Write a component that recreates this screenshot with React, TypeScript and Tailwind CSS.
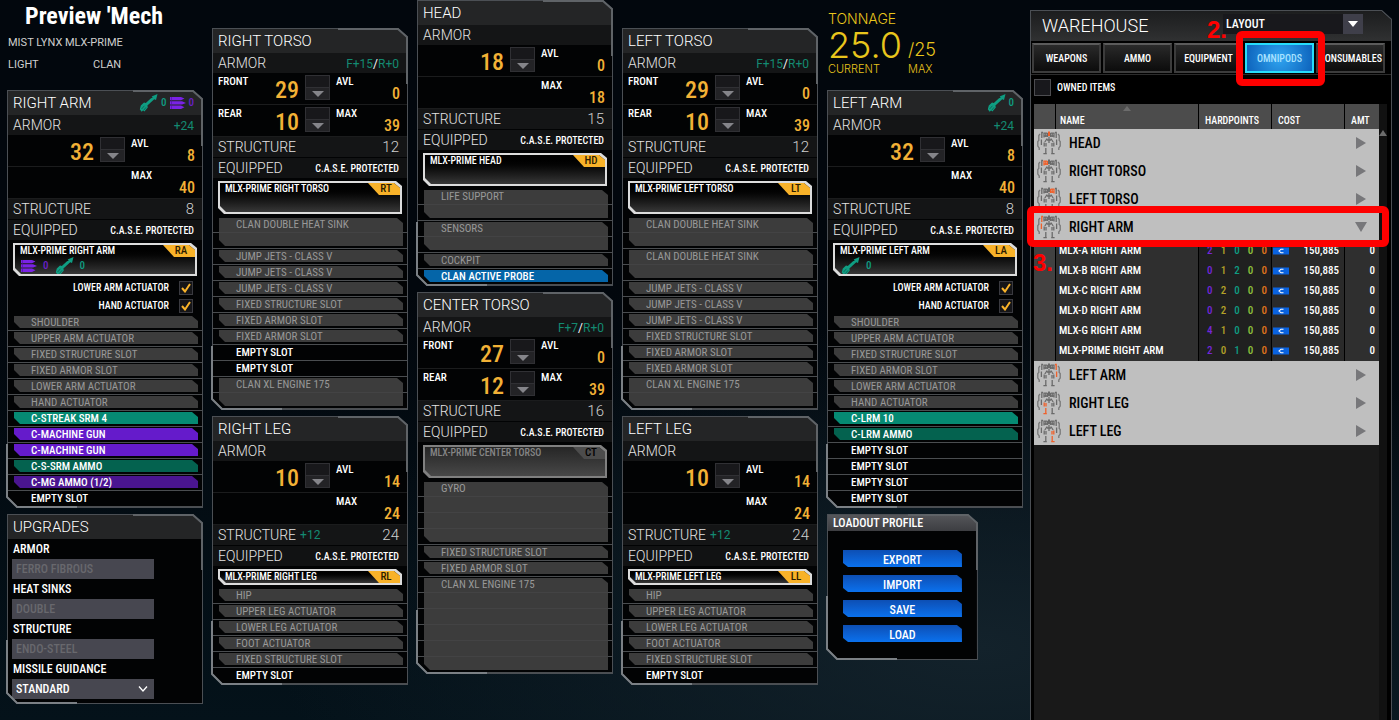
import type { ReactNode } from "react";
import { clsx } from "clsx";

const NARROW = "font-['Liberation_Sans_Narrow','Roboto_Condensed','Liberation_Sans',sans-serif]";
const WIDE = "font-['Roboto','Liberation_Sans',sans-serif]";

const FRAME_CLIP = "[clip-path:polygon(0_0,calc(100%-10px)_0,100%_9px,100%_100%,10px_100%,0_calc(100%-10px))]";
const BAR_CLIP = "[clip-path:polygon(0_0,calc(100%-6px)_0,100%_5px,100%_100%,6px_100%,0_calc(100%-6px))]";

/* Icons */

function MissileIcon() {
  return (
    <svg viewBox="0 0 19 18" className="h-[18px] w-[19px] shrink-0" fill="#0f9d82" aria-hidden="true">
      <path d="M18.5 0 L17 6 L15.2 5.2 L13.6 6.8 L8.4 11.4 L8.8 13.4 L5.4 17.4 L4 16.6 L2.6 17.8 L0.8 15.2 L1.8 11.4 L5 8.4 L6.8 9 L12 4.2 L13.8 3.4 L12.6 2.4 Z" />
      <path d="M2.6 15 L5.4 11.8 M4.6 16.4 L7 13.4" stroke="#0a4a3e" strokeWidth="0.6" />
    </svg>
  );
}

function BallisticIcon() {
  return (
    <svg viewBox="0 0 16 14" className="h-3.5 w-4 shrink-0" fill="#7a22e6" aria-hidden="true">
      <path d="M0 1 H11 L14.5 2.6 L11 4.2 H0 Z M0 5.2 H12 L16 6.9 L12 8.6 H0 Z M0 9.6 H11 L14.5 11.3 L11 13 H0 Z" />
      <path d="M1.5 1 V13" stroke="#4d1699" strokeWidth="0.6" />
    </svg>
  );
}

type PartId = "HD" | "RT" | "LT" | "RA" | "LA" | "RL" | "LL";

function MechIcon({ active }: { active: PartId }) {
  const color = (id: PartId) => (id === active ? "#f0602a" : "#6a6a6a");
  return (
    <svg viewBox="0 0 24 24" className="h-6 w-6 shrink-0" fill="none" strokeWidth="1.3" aria-hidden="true">
      <path d="M3 3 L1.8 4.5 V9.5 L0.8 10.5 V15 L2.2 17 V19 M21 3 L22.2 4.5 V9.5 L23.2 10.5 V15 L21.8 17 V19" stroke="#777" />
      <path d="M6 1.5 H4.8 V7 M4.4 8.5 V14" stroke={color("RA")} />
      <path d="M18 1.5 H19.2 V7 M19.6 8.5 V14" stroke={color("LA")} />
      <path d="M7 1.5 V6.5 M8.8 1.5 V6 M7 2.2 H10.4 M7 5 H10.8 M10.6 2 V6" stroke={color("RT")} />
      <path d="M17 1.5 V6.5 M15.2 1.5 V6 M13.6 2.2 H17 M13.2 5 H17 M13.4 2 V6" stroke={color("LT")} />
      <path d="M12 0.5 V5" strokeWidth="2" stroke={color("HD")} />
      <path d="M12 6 V12 M10.2 7.5 L7.8 11 M13.8 7.5 L16.2 11 M10 9 H14" stroke="#6a6a6a" />
      <path d="M7.2 11.5 V15.5 M9 12 V15.5 M8.8 17 V22 M6.4 22.6 H9.8" stroke={color("RL")} />
      <path d="M16.8 11.5 V15.5 M15 12 V15.5 M15.2 17 V22 M14.2 22.6 H17.6" stroke={color("LL")} />
    </svg>
  );
}

/* Frame shared by every panel */

function Frame({ title, icons, headerClass, children }: {
  title: string;
  icons?: ReactNode;
  headerClass?: string;
  children: ReactNode;
}) {
  return (
    <section className="relative">
      <div className={clsx("bg-[#4b4f54] p-px", FRAME_CLIP)}>
        <div className={clsx("bg-[#020304]", FRAME_CLIP)}>
          <header className={clsx("flex items-center justify-between pl-[5px] pr-2", headerClass ?? "h-6 bg-[#242526]")}>
            <h2 className={clsx("text-white", headerClass ? "text-xs" : `text-[15px] font-light ${WIDE}`)}>{title}</h2>
            {icons}
          </header>
          {children}
        </div>
      </div>
      <svg className="pointer-events-none absolute -left-px bottom-0 h-16 w-[72px]" viewBox="0 0 72 64" fill="none" stroke="#7b8085" strokeWidth="2" aria-hidden="true">
        <path d="M1 0 V53 L11 63 H71" />
      </svg>
      <svg className="pointer-events-none absolute right-0 top-0 h-14 w-[70px]" viewBox="0 0 70 56" fill="none" stroke="#5f6367" strokeWidth="2" aria-hidden="true">
        <path d="M0 1 H60 L69 9 V56" />
      </svg>
    </section>
  );
}

/* Body part panels */

type Kind = "fixed" | "empty" | "missile" | "missileAmmo" | "ballistic" | "ballisticAmmo" | "gear";
type Slot = [name: string, kind?: Kind, rows?: number];

const KIND_STYLE: Record<Kind, string> = {
  fixed: "bg-[#424242]/90 text-[#989898]",
  empty: "font-medium text-white",
  missile: "bg-[#068a73] font-medium text-white",
  missileAmmo: "bg-[#04624f] font-medium text-white",
  ballistic: "bg-[#651bcb] font-medium text-white",
  ballisticAmmo: "bg-[#4a1590] font-medium text-white",
  gear: "bg-[#0565a8] font-medium text-white",
};

const ROW_HEIGHT: Record<number, string> = { 1: "h-4", 2: "h-8", 4: "h-16", 6: "h-24" };

function SlotList({ slots }: { slots: Slot[] }) {
  return (
    <ul className="bg-[repeating-linear-gradient(to_bottom,transparent_0_15px,#4a4d50_15px_16px)]">
      {slots.map(([name, kind = "fixed", rows = 1], i) => (
        <li key={i} className={clsx("pb-[3px] pl-1.5 pr-1 pt-px", ROW_HEIGHT[rows])}>
          <div className={clsx("h-full pl-[17px] pt-px text-[11px] leading-3", kind !== "empty" && BAR_CLIP, KIND_STYLE[kind])}>
            {name}
          </div>
        </li>
      ))}
    </ul>
  );
}

function Stepper({ label }: { label: string }) {
  return (
    <div className="mt-0.5 flex h-[25px] flex-col border border-[#303034] bg-[#18181b]">
      <button type="button" aria-label={`Increase ${label}`} className="flex-1 border-b border-[#303034]" />
      <button type="button" aria-label={`Decrease ${label}`} className="flex flex-1 items-center justify-center bg-[#232326]">
        <svg viewBox="0 0 12 6" className="h-1.5 w-3" fill="#85858a" aria-hidden="true"><path d="M0 0 H12 L6 6 Z" /></svg>
      </button>
    </div>
  );
}

function ArmorRow({ side, value, label, amount }: { side?: string; value?: number; label: string; amount: number }) {
  return (
    <div className="grid h-8 grid-cols-[1fr_25px_64px] gap-x-1.5 border-b border-[#1b1c1d] pl-[5px] pr-[7px] font-medium">
      <div className="flex justify-between">
        <span className="pt-[3px] text-[11px] leading-3 text-white">{side}</span>
        <span className="text-2xl leading-[34px] text-[#f2b136]">{value}</span>
      </div>
      {value !== undefined ? <Stepper label={side ?? "armor"} /> : <span />}
      <div className="flex justify-between">
        <span className="pt-[3px] text-[11px] leading-3 text-white">{label}</span>
        <span className="pt-[13px] text-base leading-4 text-[#f2b136]">{amount}</span>
      </div>
    </div>
  );
}

type Part = {
  title: string;
  code: string;
  bonus?: [string, string?];
  front: number;
  rear?: number;
  avl: number;
  max: number;
  structure: number;
  structureBonus?: string;
  pod: string;
  podIcons?: ReactNode;
  icons?: ReactNode;
  small?: boolean;
  locked?: boolean;
  actuators?: string[];
  slots: Slot[];
};

function PartPanel({ part }: { part: Part }) {
  const hasRear = part.rear !== undefined;
  return (
    <Frame title={part.title} icons={part.icons}>
      <div className={clsx("flex h-5 items-center justify-between bg-[#141516] pl-[5px] pr-2 font-light", WIDE)}>
        <h3 className="text-sm leading-5 text-[#e4e4e4]">ARMOR</h3>
        {part.bonus && (
          <span className="pt-0.5 text-xs font-normal text-[#138a71]">
            {part.bonus[0]}
            {part.bonus[1] && <><span className="text-white">/</span>{part.bonus[1]}</>}
          </span>
        )}
      </div>
      <ArmorRow side={hasRear ? "FRONT" : undefined} value={part.front} label="AVL" amount={part.avl} />
      <ArmorRow side={hasRear ? "REAR" : undefined} value={part.rear} label="MAX" amount={part.max} />
      <div className={clsx("flex h-5 items-center bg-[#141516] pl-[5px] pr-2 font-light", WIDE)}>
        <h3 className="text-sm leading-5 text-[#e4e4e4]">STRUCTURE</h3>
        {part.structureBonus && <span className="pl-1 text-xs font-normal text-[#138a71]">{part.structureBonus}</span>}
        <span className="ml-auto text-[15px] text-[#d0d0d0]">{part.structure}</span>
      </div>
      <div className="mt-px flex h-5 items-center justify-between bg-[#111213] pl-[5px] pr-2">
        <h3 className={clsx("text-sm font-light leading-5 text-[#e4e4e4]", WIDE)}>EQUIPPED</h3>
        <span className="pt-0.5 text-[10px] font-medium leading-5 text-white">C.A.S.E. PROTECTED</span>
      </div>

      {/* Omnipod */}
      <div className={clsx("mx-[5px] mb-[3px] mt-[3px] p-0.5", BAR_CLIP, part.small ? "h-4" : "h-[33px]", part.locked ? "bg-[#808080]" : "bg-[#dcdcdc]")}>
        <div className={clsx("h-full", BAR_CLIP, part.locked ? "bg-linear-to-b from-[#262626] to-[#484848]" : "bg-linear-to-b from-black to-[#383838]")}>
          <div className="flex items-start justify-between">
            <span className={clsx("pl-[5px] text-[10px] font-medium leading-3", part.locked ? "text-[#858585]" : "text-white")}>{part.pod}</span>
            <span className={clsx("w-8 pl-1 text-center text-[11px] font-medium leading-3 [clip-path:polygon(0_0,100%_0,100%_100%,11px_100%)]", part.locked ? "bg-[#4c4c4c] text-black" : "bg-[#f8b229] text-[#2b1c00]")}>
              {part.code}
            </span>
          </div>
          {part.podIcons && <div className="flex items-center gap-1.5 pl-1.5 leading-4">{part.podIcons}</div>}
        </div>
      </div>

      {part.actuators?.map((name) => (
        <label key={name} className="flex h-[18px] items-center justify-end gap-2.5 pb-px pr-[9px] text-[10px] font-medium text-white">
          {name}
          <span className="grid size-3.5 place-items-center border border-[#3a3a40] bg-[#151518]">
            <input type="checkbox" defaultChecked className="peer col-start-1 row-start-1 size-3 appearance-none" />
            <svg viewBox="0 0 10 10" className="pointer-events-none invisible col-start-1 row-start-1 size-2.5 peer-checked:visible" fill="none" stroke="#f8b229" strokeWidth="2" aria-hidden="true">
              <path d="M1 5 L4 8.5 L9 1" />
            </svg>
          </span>
        </label>
      ))}
      <SlotList slots={part.slots} />
    </Frame>
  );
}

const greenZero = <span className="text-[11px] font-medium text-[#0f9d82]">0</span>;
const purpleZero = <span className="text-[11px] font-medium text-[#6a20c8]">0</span>;

const rightArm: Part = {
  title: "RIGHT ARM", code: "RA", bonus: ["+24"], front: 32, avl: 8, max: 40, structure: 8,
  pod: "MLX-PRIME RIGHT ARM",
  icons: <span className="flex items-center gap-[3px]"><MissileIcon />{greenZero}<BallisticIcon />{purpleZero}</span>,
  podIcons: <><BallisticIcon />{purpleZero}<MissileIcon />{greenZero}</>,
  actuators: ["LOWER ARM ACTUATOR", "HAND ACTUATOR"],
  slots: [
    ["SHOULDER"], ["UPPER ARM ACTUATOR"], ["FIXED STRUCTURE SLOT"], ["FIXED ARMOR SLOT"], ["LOWER ARM ACTUATOR"], ["HAND ACTUATOR"],
    ["C-STREAK SRM 4", "missile"], ["C-MACHINE GUN", "ballistic"], ["C-MACHINE GUN", "ballistic"],
    ["C-S-SRM AMMO", "missileAmmo"], ["C-MG AMMO (1/2)", "ballisticAmmo"], ["EMPTY SLOT", "empty"],
  ],
};

const leftArm: Part = {
  ...rightArm,
  title: "LEFT ARM", code: "LA", pod: "MLX-PRIME LEFT ARM",
  icons: <span className="flex items-center gap-[3px]"><MissileIcon />{greenZero}</span>,
  podIcons: <><MissileIcon />{greenZero}</>,
  slots: [
    ["SHOULDER"], ["UPPER ARM ACTUATOR"], ["FIXED STRUCTURE SLOT"], ["FIXED ARMOR SLOT"], ["LOWER ARM ACTUATOR"], ["HAND ACTUATOR"],
    ["C-LRM 10", "missile"], ["C-LRM AMMO", "missileAmmo"],
    ["EMPTY SLOT", "empty"], ["EMPTY SLOT", "empty"], ["EMPTY SLOT", "empty"], ["EMPTY SLOT", "empty"],
  ],
};

const rightTorso: Part = {
  title: "RIGHT TORSO", code: "RT", bonus: ["F+15", "R+0"], front: 29, rear: 10, avl: 0, max: 39, structure: 12,
  pod: "MLX-PRIME RIGHT TORSO",
  slots: [
    ["CLAN DOUBLE HEAT SINK", "fixed", 2], ["JUMP JETS - CLASS V"], ["JUMP JETS - CLASS V"], ["JUMP JETS - CLASS V"],
    ["FIXED STRUCTURE SLOT"], ["FIXED ARMOR SLOT"], ["FIXED ARMOR SLOT"],
    ["EMPTY SLOT", "empty"], ["EMPTY SLOT", "empty"], ["CLAN XL ENGINE 175", "fixed", 2],
  ],
};

const leftTorso: Part = {
  ...rightTorso,
  title: "LEFT TORSO", code: "LT", pod: "MLX-PRIME LEFT TORSO",
  slots: [
    ["CLAN DOUBLE HEAT SINK", "fixed", 2], ["CLAN DOUBLE HEAT SINK", "fixed", 2],
    ["JUMP JETS - CLASS V"], ["JUMP JETS - CLASS V"], ["JUMP JETS - CLASS V"],
    ["FIXED STRUCTURE SLOT"], ["FIXED ARMOR SLOT"], ["FIXED ARMOR SLOT"], ["CLAN XL ENGINE 175", "fixed", 2],
  ],
};

const head: Part = {
  title: "HEAD", code: "HD", front: 18, avl: 0, max: 18, structure: 15, pod: "MLX-PRIME HEAD",
  slots: [["LIFE SUPPORT", "fixed", 2], ["SENSORS", "fixed", 2], ["COCKPIT"], ["CLAN ACTIVE PROBE", "gear"]],
};

const centerTorso: Part = {
  title: "CENTER TORSO", code: "CT", bonus: ["F+7", "R+0"], front: 27, rear: 12, avl: 0, max: 39, structure: 16,
  pod: "MLX-PRIME CENTER TORSO", locked: true,
  slots: [["GYRO", "fixed", 4], ["FIXED STRUCTURE SLOT"], ["FIXED ARMOR SLOT"], ["CLAN XL ENGINE 175", "fixed", 6]],
};

const rightLeg: Part = {
  title: "RIGHT LEG", code: "RL", front: 10, avl: 14, max: 24, structure: 24, structureBonus: "+12",
  pod: "MLX-PRIME RIGHT LEG", small: true,
  slots: [["HIP"], ["UPPER LEG ACTUATOR"], ["LOWER LEG ACTUATOR"], ["FOOT ACTUATOR"], ["FIXED STRUCTURE SLOT"], ["EMPTY SLOT", "empty"]],
};

const leftLeg: Part = { ...rightLeg, title: "LEFT LEG", code: "LL", pod: "MLX-PRIME LEFT LEG" };

/* Upgrades and loadout profile */

const UPGRADES = [
  { label: "ARMOR", value: "FERRO FIBROUS", locked: true },
  { label: "HEAT SINKS", value: "DOUBLE", locked: true },
  { label: "STRUCTURE", value: "ENDO-STEEL", locked: true },
  { label: "MISSILE GUIDANCE", value: "STANDARD", locked: false },
];

function Upgrades() {
  return (
    <Frame title="UPGRADES">
      <div className="pb-1 pl-1 pr-12">
        {UPGRADES.map(({ label, value, locked }) => (
          <label key={label} className="block text-xs font-medium text-white">
            <span className="block pl-px leading-5">{label}</span>
            <span className="relative block">
              <select disabled={locked} className={clsx("block h-5 w-full appearance-none rounded-none bg-[#474750] px-1 text-xs font-medium opacity-100", locked ? "text-[#68686d]" : "text-white")}>
                <option>{value}</option>
              </select>
              {!locked && (
                <svg viewBox="0 0 10 6" className="pointer-events-none absolute right-1.5 top-[7px] h-1.5 w-2.5" fill="none" stroke="#fff" strokeWidth="1.3" aria-hidden="true">
                  <path d="M1 0.5 L5 5 L9 0.5" />
                </svg>
              )}
            </span>
          </label>
        ))}
      </div>
    </Frame>
  );
}

function LoadoutProfile() {
  return (
    <div className="w-[77%]">
      <Frame title="LOADOUT PROFILE" headerClass="h-4 bg-linear-to-b from-[#55565a] to-[#3d3e42] font-medium">
        <div className="flex flex-col gap-2 px-[15px] pb-[17px] pt-[19px]">
          {["EXPORT", "IMPORT", "SAVE", "LOAD"].map((name) => (
            <button key={name} type="button" className="h-[17px] bg-linear-to-b from-[#0d4fb4] to-[#0a71ee] text-xs font-medium leading-5 text-white [clip-path:polygon(0_0,calc(100%-5px)_0,100%_4px,100%_100%,5px_100%,0_calc(100%-4px))]">
              {name}
            </button>
          ))}
        </div>
      </Frame>
    </div>
  );
}

/* Warehouse */

const TABS = ["WEAPONS", "AMMO", "EQUIPMENT", "OMNIPODS", "CONSUMABLES"];

const HARDPOINT_COLORS = ["text-[#7326d8]", "text-[#b3a128]", "text-[#0f9d82]", "text-[#8fc23c]", "text-[#e2761c]"];

const PODS: [string, number[]][] = [
  ["MLX-A RIGHT ARM", [2, 1, 0, 0, 0]],
  ["MLX-B RIGHT ARM", [0, 1, 2, 0, 0]],
  ["MLX-C RIGHT ARM", [0, 2, 0, 0, 0]],
  ["MLX-D RIGHT ARM", [0, 2, 0, 0, 0]],
  ["MLX-G RIGHT ARM", [4, 1, 0, 0, 0]],
  ["MLX-PRIME RIGHT ARM", [2, 0, 1, 0, 0]],
];

const GROUPS: { id: PartId; name: string; open?: boolean }[] = [
  { id: "HD", name: "HEAD" },
  { id: "RT", name: "RIGHT TORSO" },
  { id: "LT", name: "LEFT TORSO" },
  { id: "RA", name: "RIGHT ARM", open: true },
  { id: "LA", name: "LEFT ARM" },
  { id: "RL", name: "RIGHT LEG" },
  { id: "LL", name: "LEFT LEG" },
];

function GroupRow({ id, name, open }: { id: PartId; name: string; open?: boolean }) {
  return (
    <tr>
      <td colSpan={5} className="h-7 bg-[#bfbfbf] p-0">
        <div className="relative">
          <button type="button" aria-expanded={!!open} className="flex h-7 w-full items-center pl-[3px] pr-3 text-left text-sm font-medium text-black">
            <MechIcon active={id} />
            <span className="pl-2">{name}</span>
            <svg viewBox="0 0 12 12" className="ml-auto size-3" fill="#77777a" aria-hidden="true">
              <path d={open ? "M0 1 H12 L6 11 Z" : "M1 0 L11 6 L1 12 Z"} />
            </svg>
          </button>
          {open && <div className="pointer-events-none absolute -bottom-1.5 -left-[7px] -right-2.5 -top-[7px] z-10 rounded-md border-[7px] border-[#fe0000]" />}
        </div>
      </td>
    </tr>
  );
}

function PodRow({ name, points }: { name: string; points: number[] }) {
  return (
    <tr className="h-5 text-[11px] font-medium leading-5 text-white">
      <td className="bg-[#414141] p-0" />
      <td className="border-l border-black bg-[#2f2f2f] p-0 pl-[3px]">{name}</td>
      <td className="border-l border-black bg-[#202020] p-0 pl-1">
        <span className="grid grid-cols-5 text-center">
          {points.map((n, i) => <span key={i} className={HARDPOINT_COLORS[i]}>{n}</span>)}
        </span>
      </td>
      <td className="border-l border-black bg-[#2a2a2a] p-0 pl-px pr-[5px]">
        <span className="flex items-center justify-between">
          <svg viewBox="0 0 16 8" className="h-2 w-4" aria-hidden="true">
            <path d="M0 0.5 H16 V7.5 H0 Z" fill="#0a63e0" />
            <path d="M10.5 2.2 H8 L6 4 L8 5.8 H10.5" fill="none" stroke="#fff" strokeWidth="1.1" />
          </svg>
          150,885
        </span>
      </td>
      <td className="border-l border-black bg-[#2f2f2f] p-0 pr-1 text-right">0</td>
    </tr>
  );
}

function Warehouse() {
  return (
    <aside className="flex min-h-screen flex-col pt-2.5">
      <div className="flex flex-1 flex-col bg-[#4b4f54] px-px pt-px [clip-path:polygon(-10px_0,calc(100%-10px)_0,100%_9px,100%_100%,-10px_100%)]">
        <div className="flex flex-1 flex-col bg-black [clip-path:polygon(-10px_0,calc(100%-10px)_0,100%_9px,100%_100%,-10px_100%)]">
          <header className="flex h-[30px] items-center bg-linear-to-b from-[#1c1d1e] to-[#303132] pl-[11px] pr-7">
            <h2 className={clsx("w-[181px] text-lg font-light text-white", WIDE)}>WAREHOUSE</h2>
            <div className="relative mb-1 flex-1">
              <select aria-label="Layout" className="block h-5 w-full appearance-none rounded-none bg-[#18181c] pl-[3px] text-xs font-medium text-white">
                <option>LAYOUT</option>
              </select>
              <span className="pointer-events-none absolute right-0 top-0 grid h-5 w-5 place-items-center bg-[#3f3f4a]">
                <svg viewBox="0 0 10 6" className="h-1.5 w-2.5" fill="#fff" aria-hidden="true"><path d="M0 0 H10 L5 6 Z" /></svg>
              </span>
            </div>
          </header>

          <nav className="grid grid-cols-5 gap-0.5 border-b border-[#2c2c2c] pb-px pl-px pr-1.5 pt-0.5">
            {TABS.map((tab) => (
              <button
                key={tab}
                type="button"
                className={clsx(
                  "h-[30px] whitespace-nowrap border-2 text-[10px] font-medium",
                  tab === "OMNIPODS"
                    ? "border-[#27dcfb] bg-[radial-gradient(circle,#2fa4f0,#0d62bb)] text-[#a9e2ff]"
                    : "border-[#3c3c3c] border-t-[#5b5b5b] bg-linear-to-b from-[#2a2a2a] to-[#0c0c0c] text-white",
                )}
              >
                {tab}
              </button>
            ))}
          </nav>

          <label className="flex h-[29px] items-center gap-1.5 pb-1 pl-[3px] text-[10px] font-medium text-white">
            <input type="checkbox" className="size-[17px] appearance-none border border-[#4c4c50] bg-[#18181c]" />
            OWNED ITEMS
          </label>

          <div className="flex flex-1 pl-[3px] pr-1">
            <div className="flex-1 bg-[#191919]">
              <table className="w-full table-fixed border-separate border-spacing-0">
                <colgroup>
                  <col className="w-[21px]" />
                  <col className="w-[143px]" />
                  <col className="w-[73px]" />
                  <col className="w-[73px]" />
                  <col />
                </colgroup>
                <thead>
                  <tr className="h-[25px] bg-[#4c4c4c] text-left text-[10px] text-white">
                    <th className="p-0" aria-label="Location" />
                    <th className="border-l border-black p-0 pl-1 font-medium">
                      <div className="relative pt-[7px]">
                        NAME
                        <svg viewBox="0 0 8 5" className="absolute left-[46%] top-0 h-[5px] w-2" fill="#6c6c6c" aria-hidden="true"><path d="M0 5 H8 L4 0 Z" /></svg>
                      </div>
                    </th>
                    <th className="border-l border-black p-0 pl-1.5 pt-[7px] font-medium">HARDPOINTS</th>
                    <th className="border-l border-black p-0 pl-1.5 pt-[7px] font-medium">COST</th>
                    <th className="border-l border-black p-0 pl-1.5 pt-[7px] font-medium">AMT</th>
                  </tr>
                </thead>
                <tbody>
                  {GROUPS.slice(0, 4).map((g) => <GroupRow key={g.id} {...g} />)}
                  {PODS.map(([name, points]) => <PodRow key={name} name={name} points={points} />)}
                  {GROUPS.slice(4).map((g) => <GroupRow key={g.id} {...g} />)}
                </tbody>
              </table>
            </div>
            <div className="w-2 bg-[#111]">
              <svg viewBox="0 0 8 6" className="mt-[26px] h-1.5 w-2" fill="#6c6c6c" aria-hidden="true"><path d="M0 6 H8 L4 0 Z" /></svg>
            </div>
          </div>
        </div>
      </div>
    </aside>
  );
}

export default function App() {
  return (
    <main className={clsx("grid min-h-screen grid-cols-[minmax(0,1016fr)_minmax(0,362fr)] gap-[7px] overflow-hidden bg-[#02070d] bg-[radial-gradient(ellipse_50%_45%_at_70%_90%,#13222b,transparent),linear-gradient(to_bottom,transparent_40%,#04121a)] px-[7px]", NARROW)}>
      <div className="grid grid-cols-5 items-start gap-[9px]">
        <div className="flex flex-col gap-1.5">
          <div className="-mb-1.5 h-[90px]">
            <h1 className="pl-[18px] text-2xl font-bold leading-8 text-white">Preview &apos;Mech</h1>
            <p className={clsx("grid grid-cols-[85px_1fr] whitespace-nowrap pl-px text-[11px] leading-[22px] text-[#cfcfcf]", WIDE)}>
              <span className="col-span-2">MIST LYNX MLX-PRIME</span>
              <span>LIGHT</span>
              <span>CLAN</span>
            </p>
          </div>
          <PartPanel part={rightArm} />
          <Upgrades />
        </div>
        <div className="flex flex-col gap-1.5 pt-7">
          <PartPanel part={rightTorso} />
          <PartPanel part={rightLeg} />
        </div>
        <div className="flex flex-col gap-1.5">
          <PartPanel part={head} />
          <PartPanel part={centerTorso} />
        </div>
        <div className="flex flex-col gap-1.5 pt-7">
          <PartPanel part={leftTorso} />
          <PartPanel part={leftLeg} />
        </div>
        <div className="flex flex-col gap-1.5">
          <div className="-mb-1.5 h-[90px] pl-px pt-2.5 font-['Inter','Liberation_Sans',sans-serif] font-light text-[#e9c51c]">
            <p className="text-sm leading-[18px]">TONNAGE</p>
            <dl className="grid grid-cols-[76px_1fr] items-end gap-x-1">
              <dd className="text-4xl leading-[34px]">25.0</dd>
              <dd className="text-lg leading-6">/25</dd>
              <dt className="text-[11px] leading-[14px]">CURRENT</dt>
              <dt className="text-[11px] leading-[14px]">MAX</dt>
            </dl>
          </div>
          <PartPanel part={leftArm} />
          <LoadoutProfile />
        </div>
      </div>

      <div className="relative">
        <Warehouse />
        {/* Step markers */}
        <div className="pointer-events-none absolute left-[57%] top-[31px] h-[55px] w-[89px] rounded-md border-[7px] border-[#fe0000]" />
        <span className="absolute left-[177px] top-[18px] font-['Liberation_Sans',sans-serif] text-2xl font-bold leading-6 text-[#fe0000]">2.</span>
        <span className="absolute left-[3px] top-[251px] font-['Liberation_Sans',sans-serif] text-2xl font-bold leading-6 text-[#fe0000]">3.</span>
      </div>
    </main>
  );
}
